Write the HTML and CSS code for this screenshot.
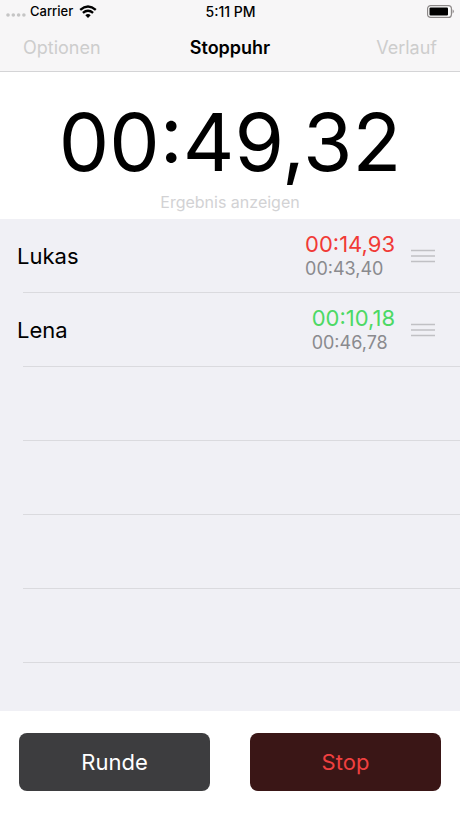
FILE: index.html
```html
<!DOCTYPE html>
<html lang="de">
<head>
<meta charset="utf-8">
<meta name="viewport" content="width=device-width, initial-scale=1">
<title>Stoppuhr</title>
<link rel="stylesheet" href="styles.css">
</head>
<body>
<div class="app">
  <header class="top">
    <div class="status">
      <div class="carrier">
        <svg class="dots" viewBox="0 0 20 12" aria-hidden="true"><circle cx="2" cy="10" r="1.8"/><circle cx="7.3" cy="10" r="1.8"/><circle cx="12.6" cy="10" r="1.8"/><circle cx="17.9" cy="10" r="1.8"/></svg>
        <span>Carrier</span>
        <svg class="wifi" viewBox="0 0 18 13" aria-hidden="true"><path d="M1.2 4.9Q9-1.7 16.8 4.9M3.9 7.9Q9 3.6 14.1 7.9"/><path class="solid" d="M6.3 10.2Q9 7.8 11.7 10.2L9 12.9Z"/></svg>
      </div>
      <span class="clock">5:11 PM</span>
      <svg class="battery" viewBox="0 0 28 13" aria-hidden="true"><rect class="case" x=".6" y=".6" width="23.8" height="11.8" rx="3"/><rect x="2.5" y="2.5" width="18.5" height="8" rx="1"/><path class="tip" d="M25.5 4.3Q28.5 6.5 25.5 8.7Z"/></svg>
    </div>
    <nav class="nav">
      <button class="link" type="button">Optionen</button>
      <h1>Stoppuhr</h1>
      <button class="link end" type="button">Verlauf</button>
    </nav>
  </header>
  <section class="timer">
    <div class="total">00:49,32</div>
    <button class="result" type="button">Ergebnis anzeigen</button>
  </section>
  <ul class="list">
    <li class="row"><span class="name">Lukas</span><span class="times"><span class="lap slow">00:14,93</span><span class="sum">00:43,40</span></span><svg class="grip" viewBox="0 0 24 14" aria-hidden="true"><path d="M0 1.5H24M0 7H24M0 12.5H24"/></svg></li>
    <li class="row"><span class="name">Lena</span><span class="times"><span class="lap fast">00:10,18</span><span class="sum">00:46,78</span></span><svg class="grip" viewBox="0 0 24 14" aria-hidden="true"><path d="M0 1.5H24M0 7H24M0 12.5H24"/></svg></li>
    <li class="row"></li><li class="row"></li><li class="row"></li><li class="row"></li>
  </ul>
  <footer class="actions">
    <button class="round" type="button">Runde</button>
    <button class="stop" type="button">Stop</button>
  </footer>
</div>
</body>
</html>
```
FILE: styles.css
```css
* { box-sizing: border-box; }
body { margin: 0; background: #fff; color: #000; font-family: Inter, "Liberation Sans", sans-serif; }
button { border: 0; padding: 0; background: none; font: inherit; color: inherit; }
.app { min-height: 100vh; display: flex; flex-direction: column; }
.top { background: #f7f6f7; border-bottom: 1px solid #d4d4d6; }
.status { height: 22px; padding: 0 5px 0 6px; display: grid; grid-template-columns: 1fr auto 1fr; align-items: center; font-size: 13px; font-weight: 500; }
.carrier { display: flex; align-items: center; gap: 4px; }
.dots { width: 20px; height: 12px; fill: #c5c5c5; }
.wifi { width: 18px; height: 13px; margin-left: 2px; fill: none; stroke: #000; stroke-width: 2.4; }
.wifi .solid { fill: #000; stroke: none; }
.clock { font-size: 14px; }
.battery { width: 28px; height: 13px; justify-self: end; }
.case { fill: #fff; stroke: #8c8888; stroke-width: 1.2; }
.tip { fill: #9c9898; }
.nav { height: 49px; padding: 2px 23px 0; display: grid; grid-template-columns: 1fr auto 1fr; align-items: center; font-size: 18px; }
h1 { margin: 0; font-size: 18px; font-weight: 600; }
.link { justify-self: start; color: #cdcdcd; }
.link.end { justify-self: end; }
.timer { height: 147px; padding-top: 20px; display: flex; flex-direction: column; align-items: center; }
.total { font-size: 80px; line-height: 100px; font-weight: 400; }
.result { font-size: 16px; line-height: 20px; color: #d2d2d4; }
.list { flex: 1; margin: 0; padding: 0; list-style: none; background: #f0f0f5; }
.row { height: 74px; padding: 0 25px 0 17px; display: flex; align-items: center; background: linear-gradient(#dadade, #dadade) 23px 100% / 100% 1px no-repeat; }
.name { flex: 1; font-size: 22px; }
.times { display: flex; flex-direction: column; margin-right: 16px; }
.lap { font-size: 22px; line-height: 26px; }
.sum { font-size: 18px; line-height: 24px; color: #8a8a8e; }
.slow { color: #f13a36; }
.fast { color: #4cd964; }
.grip { width: 24px; height: 14px; stroke: #c0c0c4; stroke-width: 1.5; }
.actions { height: 107px; padding: 22px 19px; display: grid; grid-template-columns: 1fr 1fr; gap: 40px; align-items: start; }
.actions button { height: 58px; border-radius: 8px; font-size: 22px; }
.actions .round { background: #3d3d3f; color: #fff; }
.actions .stop { background: #3a1616; color: #f04040; }
```
